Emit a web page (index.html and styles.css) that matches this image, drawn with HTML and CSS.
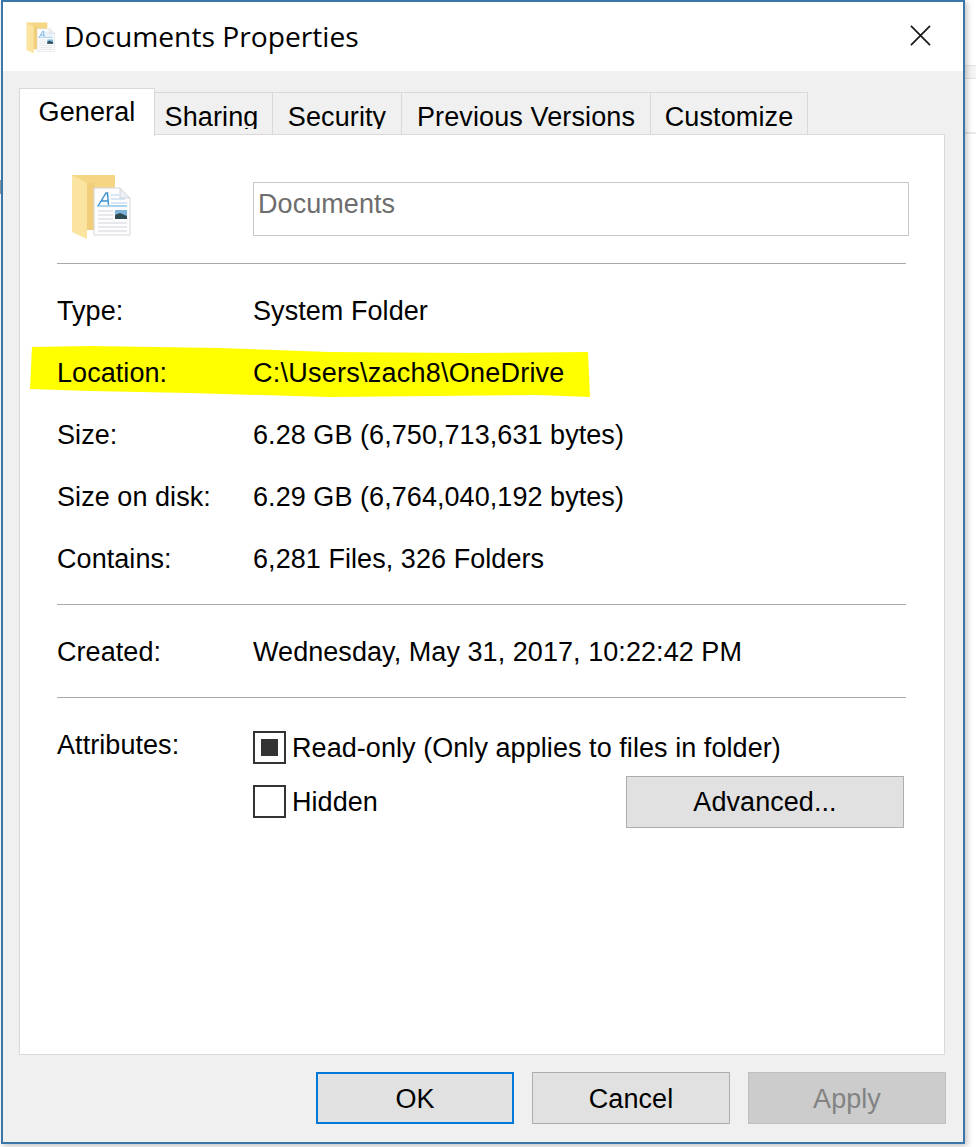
FILE: index.html
```html
<!DOCTYPE html>
<html lang="en">
<head>
<meta charset="utf-8">
<title>Documents Properties</title>
<link rel="stylesheet" href="styles.css">
</head>
<body>
<svg class="defs" width="0" height="0" aria-hidden="true">
  <symbol id="folder-doc" viewBox="0 0 62 66">
    <path d="M1 1H44V56H10Z" fill="#f5d684"/>
    <path d="M1 1L16 9V65L1 58Z" fill="#fbe4a0"/>
    <path d="M16 9H23V56H16Z" fill="#f1ce7a"/>
    <path d="M23 14H49L59 24V61H23Z" fill="#fdfdfe" stroke="#d2d6dd"/>
    <path d="M49 14V24H59Z" fill="#eceff4" stroke="#d2d6dd"/>
    <path d="M27 32L35 19H36.500L37.500 31M30 27H37" fill="none" stroke="#3a8fd0" stroke-width="1.400"/>
    <path d="M26 32H56" stroke="#6bb0e0" stroke-width="1.100"/>
    <path d="M40 21H48M40 25H54M40 29H56" stroke="#b4d2ea"/>
    <path d="M27 37H42M27 41H42M27 45H42M27 49H56M27 53H56M27 57H56" stroke="#cfd3dc"/>
    <rect x="44" y="36" width="12" height="9" fill="#7fb4da"/>
    <path d="M44 41L49 39L56 42V45H44Z" fill="#2f4a52"/>
  </symbol>
</svg>
<div class="backdrop-line backdrop-top"></div>
<div class="backdrop-line backdrop-mid"></div>
<div class="backdrop-mark"></div>
<main class="dialog">
  <header class="titlebar">
    <svg class="title-icon"><use href="#folder-doc"/></svg>
    <h1 class="title">Documents Properties</h1>
    <svg class="close" viewBox="0 0 22 22"><path d="M1 1L21 21M21 1L1 21" stroke="#1a1a1a" stroke-width="1.800" fill="none"/></svg>
  </header>
  <div class="body">
    <nav class="tabs">
      <span class="tab tab-active">General</span>
      <span class="tab tab-sharing"><span class="tab-label tab-clip">Sharing</span></span>
      <span class="tab tab-security"><span class="tab-label tab-clip">Security</span></span>
      <span class="tab tab-previous"><span class="tab-label">Previous Versions</span></span>
      <span class="tab tab-customize"><span class="tab-label">Customize</span></span>
    </nav>
    <section class="panel">
      <div class="head-row">
        <svg class="big-icon"><use href="#folder-doc"/></svg>
        <div class="name-box">Documents</div>
      </div>
      <hr class="rule rule-one">
      <dl class="info">
        <div class="row"><dt>Type:</dt><dd>System Folder</dd></div>
        <div class="row row-marked">
          <svg class="marker" viewBox="0 0 562 54" preserveAspectRatio="none"><path d="M2 2L60 1L190 3L300 7L440 8L560 7L562 52L510 50L300 52L160 48L60 46L0 44Z" fill="#ffff00"/></svg>
          <dt>Location:</dt><dd class="path">C:\Users\zach8\OneDrive</dd>
        </div>
        <div class="row"><dt>Size:</dt><dd>6.28 GB (6,750,713,631 bytes)</dd></div>
        <div class="row"><dt>Size on disk:</dt><dd>6.29 GB (6,764,040,192 bytes)</dd></div>
        <div class="row"><dt>Contains:</dt><dd>6,281 Files, 326 Folders</dd></div>
      </dl>
      <hr class="rule rule-two">
      <div class="row row-created"><span class="label">Created:</span><span>Wednesday, May 31, 2017, 10:22:42 PM</span></div>
      <hr class="rule rule-three">
      <div class="attrs">
        <span class="label attrs-label">Attributes:</span>
        <div class="attrs-options">
          <div class="check-row">
            <span class="check"><span class="check-fill"></span></span>
            <span class="check-text">Read-only (Only applies to files in folder)</span>
          </div>
          <div class="check-row check-row-last">
            <span class="check"></span>
            <span class="check-text">Hidden</span>
            <button class="btn btn-advanced" type="button">Advanced...</button>
          </div>
        </div>
      </div>
    </section>
    <footer class="actions">
      <button class="btn btn-main btn-ok" type="button">OK</button>
      <button class="btn btn-main" type="button">Cancel</button>
      <button class="btn btn-main btn-off" type="button">Apply</button>
    </footer>
  </div>
</main>
</body>
</html>
```
FILE: styles.css
```css
* { box-sizing: border-box; }
html, body { margin: 0; padding: 0; }
body {
  width: 976px;
  height: 1147px;
  overflow: hidden;
  background: #fff;
  position: relative;
  font-family: "Liberation Sans", Arial, sans-serif;
  font-size: 27px;
  letter-spacing: .06px;
  color: #000;
}
.defs { position: absolute; }
.backdrop-line { position: absolute; left: 964px; width: 12px; background: #e9e9e9; }
.backdrop-top { top: 65px; height: 14px; background: #f4f4f4; border-top: 1px solid #e3e3e3; border-bottom: 1px solid #e3e3e3; }
.backdrop-mid { top: 132px; height: 2px; }
.backdrop-mark { position: absolute; left: 0; top: 180px; width: 1px; height: 14px; background: #8a9aa8; }
.dialog {
  position: relative;
  width: 964px;
  height: 1144px;
  margin-left: 1px;
  border: 2px solid #3a76a8;
  box-shadow: 2px 2px 6px rgba(0, 0, 0, .25);
  display: flex;
  flex-direction: column;
  background: #f0f0f0;
}
.titlebar {
  height: 69px;
  flex: none;
  background: #fff;
  display: flex;
  align-items: center;
  padding-left: 23px;
}
.title-icon { width: 30px; height: 34px; margin-top: 2px; flex: none; }
.title {
  margin: 0 0 2px 8px;
  font-family: "Open Sans", "Noto Sans", sans-serif;
  font-weight: 400;
  font-size: 28.2px;
  letter-spacing: 0;
  flex: 1;
}
.close { width: 21px; height: 21px; margin-right: 32px; margin-bottom: 3px; flex: none; }
.body { flex: 1; display: flex; flex-direction: column; padding: 16px 18px 0 16px; }
.tabs { display: flex; height: 48px; align-items: flex-end; flex: none; position: relative; z-index: 1; letter-spacing: .12px; }
.tab {
  height: 43px;
  border: 1px solid #d9d9d9;
  border-left: 0;
  border-bottom: 0;
  display: flex;
  align-items: flex-start;
  justify-content: center;
}
.tab-label { display: block; line-height: 48px; }
.tab-clip { height: 36px; overflow: hidden; }
.tab-active {
  height: 48px;
  width: 136px;
  background: #fff;
  border-left: 1px solid #d9d9d9;
  align-items: center;
  margin-bottom: -1px;
}
.tab-sharing { width: 118px; padding-right: 4px; }
.tab-security { width: 129px; }
.tab-previous { width: 249px; }
.tab-customize { width: 157px; }
.panel {
  height: 921px;
  margin-top: -1px;
  flex: none;
  background: #fff;
  border: 1px solid #d9d9d9;
  padding: 47px 0 0 37px;
}
.head-row { display: flex; height: 81px; }
.big-icon { width: 62px; height: 66px; margin: -8px 0 0 14px; flex: none; }
.name-box {
  width: 656px;
  height: 54px;
  margin-left: 120px;
  border: 1px solid #c8c8c8;
  padding: 4px 0 0 4px;
  color: #6d6d6d;
  line-height: 34px;
}
.rule { margin: 0; width: 849px; border: 0; border-top: 1px solid #a9a9a9; }
.info { margin: 16px 0 0; }
.row { display: flex; height: 62px; align-items: center; position: relative; }
.row dt, .row .label { width: 196px; flex: none; }
.row dd { margin: 0; position: relative; }
.row dd.path { letter-spacing: .24px; }
.row dt { position: relative; }
.marker { position: absolute; left: -27px; top: 3px; width: 560px; height: 54px; }
.rule-two { margin-top: 14px; }
.row-created { margin-top: 16px; }
.rule-three { margin-top: 14px; }
.attrs { display: flex; margin-top: 31px; position: relative; }
.attrs-label { width: 196px; flex: none; line-height: 32px; }
.attrs-options { flex: 1; }
.check-row { display: flex; align-items: center; gap: 6px; height: 33px; margin-top: 2px; }
.check-row-last { margin-top: 21px; }
.check-text { padding-top: 2px; }
.check {
  width: 33px;
  height: 33px;
  border: 2px solid #333;
  display: flex;
  align-items: center;
  justify-content: center;
  flex: none;
  background: #fff;
}
.check-fill { width: 17px; height: 17px; background: #333; }
.btn {
  font: inherit;
  letter-spacing: inherit;
  color: #000;
  background: #e1e1e1;
  border: 1px solid #adadad;
  padding: 2px 0 0;
}
.btn-advanced { width: 278px; height: 52px; margin-left: auto; margin-right: 40px; }
.actions { flex: 1; display: flex; justify-content: flex-end; gap: 18px; padding: 17px 0 0; margin-right: -1px; }
.btn-main { width: 198px; height: 52px; }
.btn-ok { border: 2px solid #0078d7; }
.btn-off { background: #cccccc; border-color: #bfbfbf; color: #838383; }
```
